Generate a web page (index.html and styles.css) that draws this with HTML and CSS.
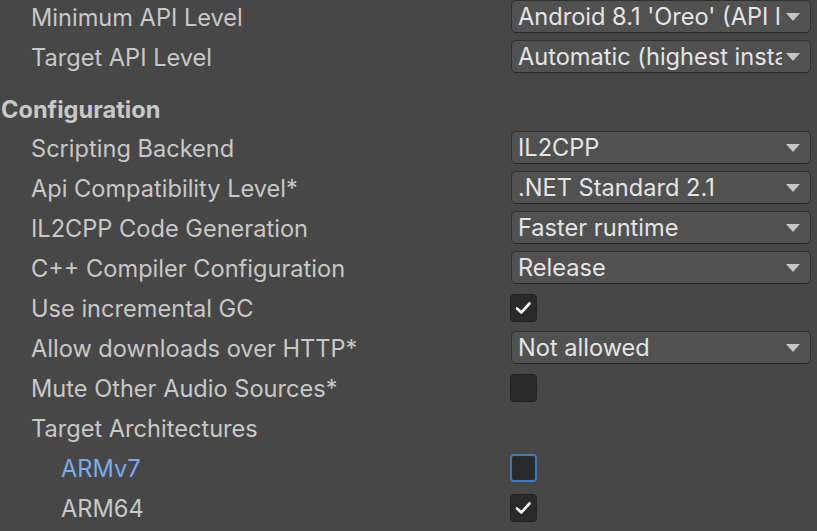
FILE: index.html
```html
<!DOCTYPE html>
<html>
<head>
<meta charset="utf-8">
<link rel="stylesheet" href="styles.css">
</head>
<body>
<div class="panel">
  <div class="row"><span class="label">Minimum API Level</span><div class="dropdown"><span class="dd-text">Android 8.1 'Oreo' (API level 27)</span><span class="arrow"></span></div></div>
  <div class="row"><span class="label">Target API Level</span><div class="dropdown"><span class="dd-text">Automatic (highest installed)</span><span class="arrow"></span></div></div>
  <div class="header">Configuration</div>
  <div class="row"><span class="label">Scripting Backend</span><div class="dropdown"><span class="dd-text">IL2CPP</span><span class="arrow"></span></div></div>
  <div class="row"><span class="label">Api Compatibility Level*</span><div class="dropdown"><span class="dd-text">.NET Standard 2.1</span><span class="arrow"></span></div></div>
  <div class="row"><span class="label">IL2CPP Code Generation</span><div class="dropdown"><span class="dd-text">Faster runtime</span><span class="arrow"></span></div></div>
  <div class="row"><span class="label">C++ Compiler Configuration</span><div class="dropdown"><span class="dd-text">Release</span><span class="arrow"></span></div></div>
  <div class="row"><span class="label">Use incremental GC</span><div class="checkbox"><svg width="27" height="28" viewBox="0 0 27 28"><path d="M7 14.5 L11.3 18.5 L19.5 9.5" fill="none" stroke="#f2f2f2" stroke-width="2.6" stroke-linecap="round" stroke-linejoin="round"/></svg></div></div>
  <div class="row"><span class="label">Allow downloads over HTTP*</span><div class="dropdown"><span class="dd-text">Not allowed</span><span class="arrow"></span></div></div>
  <div class="row"><span class="label">Mute Other Audio Sources*</span><div class="checkbox"></div></div>
  <div class="row"><span class="label">Target Architectures</span></div>
  <div class="row sub"><span class="label focus">ARMv7</span><div class="checkbox focused"></div></div>
  <div class="row sub"><span class="label">ARM64</span><div class="checkbox"><svg width="27" height="28" viewBox="0 0 27 28"><path d="M7 14.5 L11.3 18.5 L19.5 9.5" fill="none" stroke="#f2f2f2" stroke-width="2.6" stroke-linecap="round" stroke-linejoin="round"/></svg></div></div>
</div>
</body>
</html>
```
FILE: styles.css
```css
html, body {
  margin: 0;
  padding: 0;
  background: #474747;
  width: 817px;
  height: 531px;
  overflow: hidden;
}
.panel {
  margin-top: -3px;
  font-family: Inter, "Noto Sans", sans-serif;
  font-size: 23.6px;
  color: #c8c8c8;
}
.row {
  display: flex;
  align-items: center;
  height: 40px;
}
.label {
  width: 480px;
  padding-left: 31px;
  white-space: nowrap;
  flex: none;
}
.sub .label {
  padding-left: 61px;
  width: 450px;
}
.label.focus {
  color: #7aabef;
}
.header {
  margin-top: 15px;
  height: 36px;
  line-height: 36px;
  padding-left: 1px;
  font-weight: 700;
  color: #c8c8c8;
}
.dropdown {
  box-sizing: border-box;
  width: 300px;
  height: 33px;
  background: #515151;
  border: 1.5px solid #2f2f2f;
  border-bottom-color: #252525;
  border-radius: 5px;
  display: flex;
  align-items: center;
  padding-left: 6px;
  padding-right: 10px;
  color: #e4e4e4;
  margin-top: -1px;
}
.dd-text {
  flex: 1;
  min-width: 0;
  overflow: hidden;
  white-space: nowrap;
}
.arrow {
  flex: none;
  width: 0;
  height: 0;
  border-left: 7px solid transparent;
  border-right: 7px solid transparent;
  border-top: 8px solid #c4c4c4;
  margin-left: 4px;
}
.checkbox {
  box-sizing: border-box;
  width: 27px;
  height: 28px;
  background: #2a2a2a;
  border: 1.5px solid #202020;
  border-radius: 4px;
  position: relative;
  margin-left: -1px;
}
.checkbox svg {
  position: absolute;
  left: -1.5px;
  top: -1.5px;
}
.checkbox.focused {
  border: 2px solid #3a79bb;
}
```
